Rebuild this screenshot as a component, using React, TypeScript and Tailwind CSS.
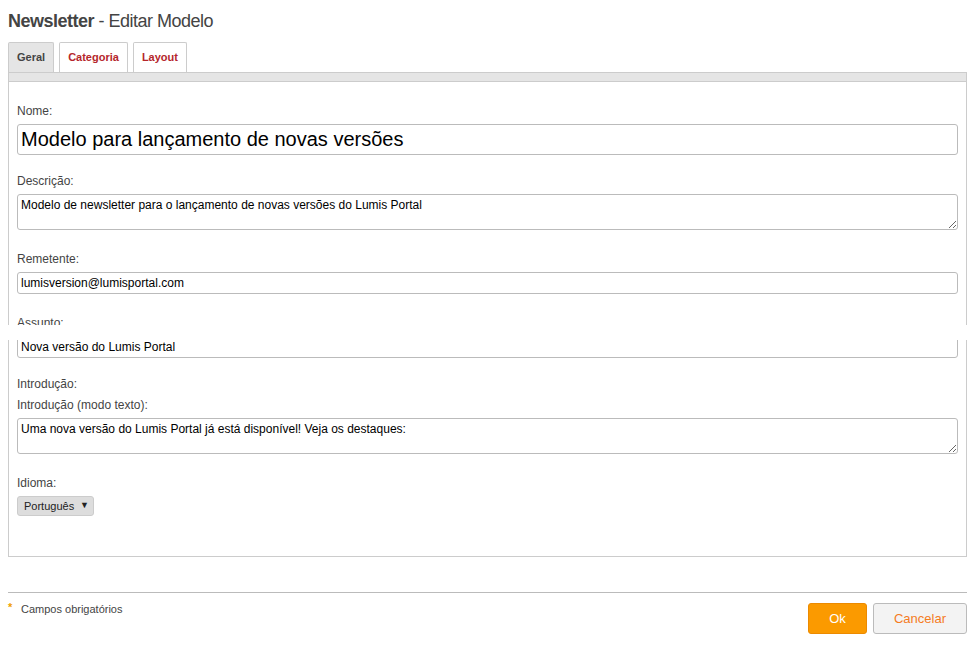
import React from 'react';

const labelCls = 'block h-[14px] leading-[14px] text-[12px] text-[#444] mb-[6px]';
const inputCls =
  'block w-full border border-[#bbb] rounded-[3px] px-[3px] text-black outline-none bg-white';

function Field({ label, children, after }: { label: string; children: React.ReactNode; after: string }) {
  return (
    <div className={after}>
      <label className={labelCls}>{label}</label>
      {children}
    </div>
  );
}

export default function App() {
  const [nome, setNome] = React.useState('Modelo para lançamento de novas versões');
  const [descricao, setDescricao] = React.useState(
    'Modelo de newsletter para o lançamento de novas versões do Lumis Portal'
  );
  const [remetente, setRemetente] = React.useState('lumisversion@lumisportal.com');
  const [assunto, setAssunto] = React.useState('Nova versão do Lumis Portal');
  const [intro, setIntro] = React.useState(
    'Uma nova versão do Lumis Portal já está disponível! Veja os destaques:'
  );
  const tabs = ['Geral', 'Categoria', 'Layout'];
  const [tab, setTab] = React.useState('Geral');

  return (
    <div className="relative w-[975px] h-[669px] bg-white font-['Liberation_Sans',Arial,sans-serif] px-[8px]">
      <h1 className="pt-[10px] h-[42px] text-[18px] leading-[22px] text-[#444] tracking-[-0.5px]">
        <span className="font-bold">Newsletter</span> - Editar Modelo
      </h1>

      <div className="flex gap-[5px] h-[30px]">
        {tabs.map((t) => (
          <button
            key={t}
            onClick={() => setTab(t)}
            className={
              'h-[30px] px-[8px] border border-b-0 border-[#ccc] rounded-t-[2px] text-[11px] font-bold ' +
              (tab === t ? 'bg-[#e5e5e5] text-[#444]' : 'bg-white text-[#b5262b]')
            }
          >
            {t}
          </button>
        ))}
      </div>
      <div className="h-[10px] bg-[#e5e5e5] border border-[#ccc]" />

      <div className="border border-t-0 border-[#ccc] px-[8px] pt-[22px] pb-[40px]">
        <Field label="Nome:" after="mb-[19px]">
          <input
            value={nome}
            onChange={(e) => setNome(e.target.value)}
            className={inputCls + ' h-[31px] text-[20px]'}
          />
        </Field>
        <Field label="Descrição:" after="mb-[22px]">
          <textarea
            value={descricao}
            onChange={(e) => setDescricao(e.target.value)}
            className={inputCls + ' h-[36px] text-[12px] leading-[14px] pt-[3px] resize-y align-top'}
          />
        </Field>
        <Field label="Remetente:" after="mb-[22px]">
          <input
            value={remetente}
            onChange={(e) => setRemetente(e.target.value)}
            className={inputCls + ' h-[22px] text-[12px]'}
          />
        </Field>
        <Field label="Assunto:" after="mb-[19px]">
          <input
            value={assunto}
            onChange={(e) => setAssunto(e.target.value)}
            className={inputCls + ' h-[22px] text-[12px]'}
          />
        </Field>
        <div className={labelCls + ' !mb-[7px]'}>Introdução:</div>
        <Field label="Introdução (modo texto):" after="mb-[22px]">
          <textarea
            value={intro}
            onChange={(e) => setIntro(e.target.value)}
            className={inputCls + ' h-[36px] text-[12px] leading-[14px] pt-[3px] resize-y align-top'}
          />
        </Field>
        <Field label="Idioma:" after="">
          <button className="flex items-center h-[20px] w-[77px] pl-[6px] pr-[4px] bg-[#ddd] border border-[#ccc] rounded-[3px] text-[11px] text-[#222] justify-between">
            <span>Português</span>
            <span className="text-[9px]">▼</span>
          </button>
        </Field>
      </div>

      <div className="mt-[35px] border-t border-[#bbb]" />
      <div className="flex justify-between">
        <div className="flex items-start pt-[9px] text-[11px] text-[#444]">
          <span className="text-[#f0a000] font-bold text-[11px] leading-[11px] w-[13px]">*</span>
          <span className="leading-[14px]">Campos obrigatórios</span>
        </div>
        <div className="flex gap-[6px] pt-[10px]">
          <button className="h-[31px] w-[59px] bg-[#fb9a00] border border-[#ec8a00] rounded-[3px] text-white text-[13px]">
            Ok
          </button>
          <button className="h-[31px] w-[94px] bg-[#f3f3f3] border border-[#bbb] rounded-[3px] text-[#f57c1f] text-[13px]">
            Cancelar
          </button>
        </div>
      </div>

      {/* white band cutting through the page, as in the capture */}
      <div className="absolute left-0 right-0 top-[325px] h-[15px] bg-white" />
    </div>
  );
}
